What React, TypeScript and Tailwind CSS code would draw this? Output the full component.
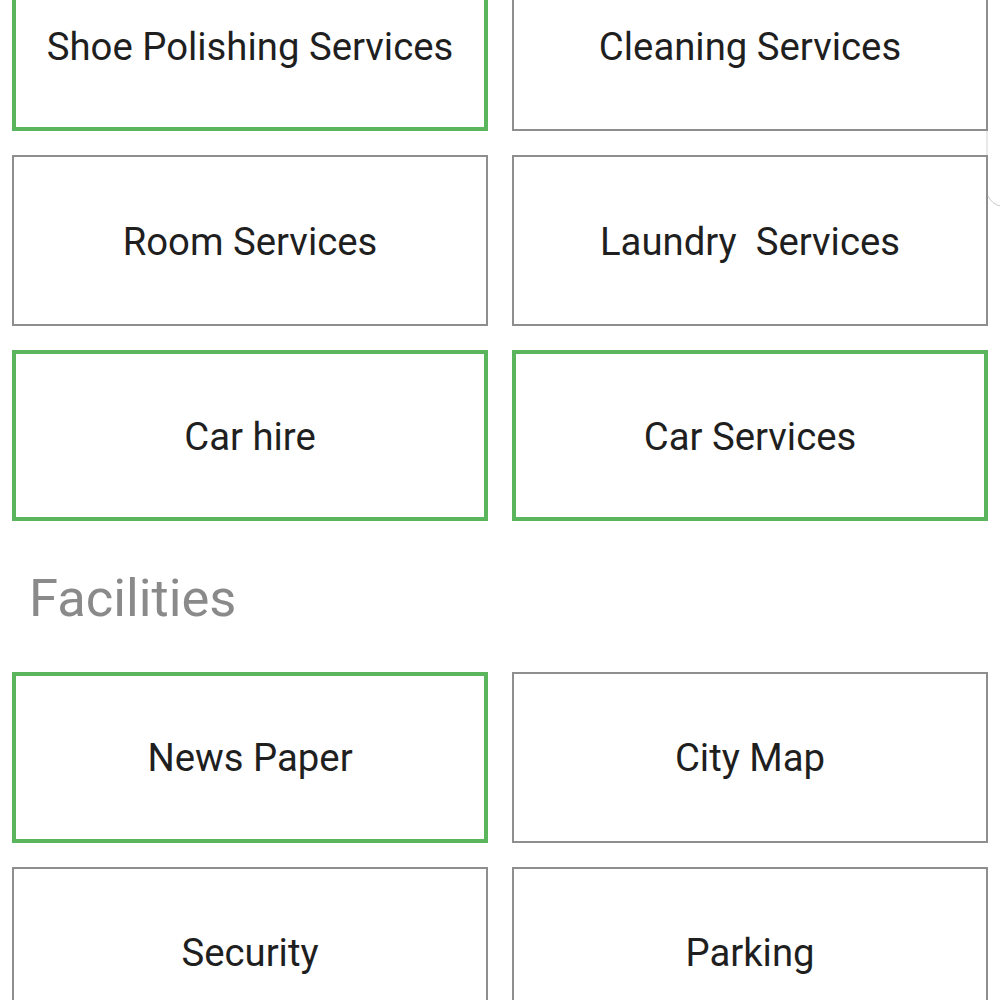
import React from "react";

type Item = { label: string; active?: boolean };

const services: Item[] = [
  { label: "Shoe Polishing Services", active: true },
  { label: "Cleaning Services" },
  { label: "Room Services" },
  { label: "Laundry\u00a0 Services" },
  { label: "Car hire", active: true },
  { label: "Car Services", active: true },
];

const facilities: Item[] = [
  { label: "News Paper", active: true },
  { label: "City Map" },
  { label: "Security" },
  { label: "Parking" },
];

function Card({ item }: { item: Item }) {
  return (
    <div
      className={
        item.active
          ? "h-[171px] flex items-center justify-center bg-white border-4 border-[#5ab55c] pt-[3px]"
          : "h-[171px] flex items-center justify-center bg-white border-2 border-[#8e8e8e] pt-[3px]"
      }
    >
      <span className="text-[38.3px] leading-none text-[#1f1f1f]">
        {item.label}
      </span>
    </div>
  );
}

export default function App() {
  return (
    <div
      className="relative w-[1000px] h-[1000px] overflow-hidden bg-white"
      style={{ fontFamily: "Roboto, 'Noto Sans', sans-serif" }}
    >
      <div className="-mt-[40px] px-3">
        <div className="grid grid-cols-2 gap-x-6 gap-y-6">
          {services.map((s) => (
            <Card key={s.label} item={s} />
          ))}
        </div>
        <h2 className="mt-[51px] mb-[47px] pl-[17px] text-[52.5px] leading-none font-normal text-[#8a8a8a]">
          Facilities
        </h2>
        <div className="grid grid-cols-2 gap-x-6 gap-y-6">
          {facilities.map((s) => (
            <Card key={s.label} item={s} />
          ))}
        </div>
      </div>
      <svg
        className="absolute top-0 right-0 pointer-events-none"
        width="14"
        height="240"
        viewBox="0 0 14 240"
      >
        <line x1="1" y1="131" x2="1" y2="155" stroke="#e2e2e2" strokeWidth="1.5" />
        <path d="M2 196 Q6 204 14 206" fill="none" stroke="#c8c8c8" strokeWidth="1" />
      </svg>
    </div>
  );
}
